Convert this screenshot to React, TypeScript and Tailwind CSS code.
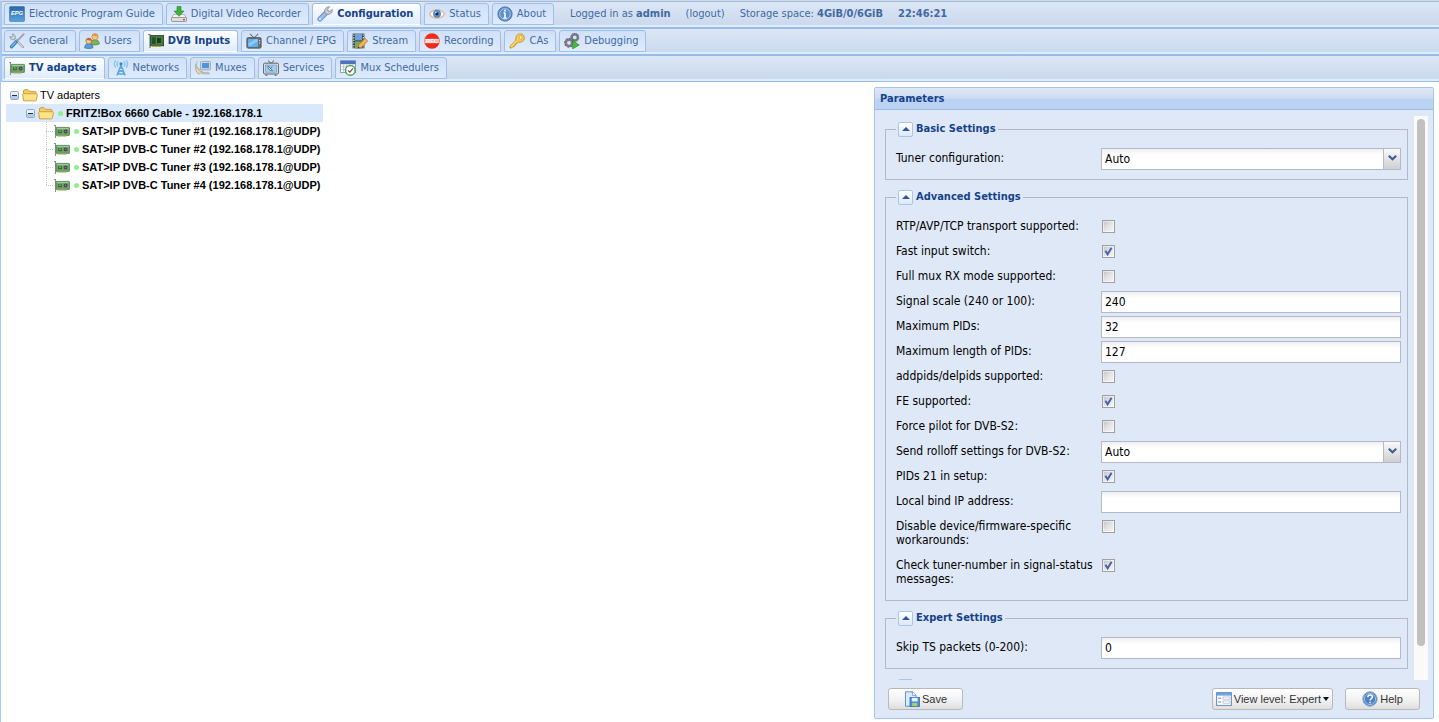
import { useState, type ReactNode } from "react";

function Svg({ children }: { children: ReactNode }) {
  return (
    <svg viewBox="0 0 16 16" className="size-4 shrink-0" aria-hidden="true">
      {children}
    </svg>
  );
}

const EpgIcon = () => (
  <Svg>
    <defs>
      <linearGradient id="epg" x1="0" y1="0" x2="0" y2="1">
        <stop offset="0" stopColor="#2c66a3" />
        <stop offset="1" stopColor="#5aa3de" />
      </linearGradient>
    </defs>
    <rect x="0.5" y="0.5" width="15" height="15" rx="1" fill="url(#epg)" stroke="#3c77b5" strokeWidth="0.6" />
    <text x="8" y="9.3" fontSize="5.8" fontWeight="700" fontStyle="italic" textAnchor="middle" fill="#fff" fontFamily="Liberation Sans, sans-serif">EPG</text>
  </Svg>
);
const DriveIcon = () => (
  <Svg>
    <path d="M2.5 8.5h11l2 4H.5z" fill="#f4f4f4" stroke="#999" strokeWidth="0.7" />
    <rect x="0.5" y="11.5" width="15" height="4" rx="0.8" fill="#ddd" stroke="#888" strokeWidth="0.8" />
    <rect x="12" y="13" width="2" height="1.3" fill="#d33" />
    <path d="M6 .5h4V5h3L8 10.3 3 5h3z" fill="#3fb13b" stroke="#278527" strokeWidth="0.6" />
  </Svg>
);
const WrenchIcon = () => (
  <Svg>
    <path d="M2.9 13.1 9 7" stroke="#6b8fd0" strokeWidth="5" strokeLinecap="round" />
    <path d="M2.9 13.1 8.5 7.5" stroke="#9dbcf0" strokeWidth="3" strokeLinecap="round" />
    <path d="M8.2 7.8C6.6 4 9 .5 12.6.8L10.7 3l.4 2 2 .4 2.2-2c.5 3.9-3.1 6-7.1 4.4z" fill="#c9ccd1" stroke="#84898f" strokeWidth="0.8" />
    <circle cx="3" cy="13" r="0.9" fill="#e6eefb" />
  </Svg>
);
const EyeIcon = () => (
  <Svg>
    <path d="M.5 8C4 2.2 12 2.2 15.5 8 12 13.5 4 13.5.5 8z" fill="#fff" stroke="#e0b595" strokeWidth="1.3" />
    <circle cx="8" cy="7.8" r="3.7" fill="#5c93d0" stroke="#3f6fad" strokeWidth="0.6" />
    <circle cx="8" cy="7.8" r="1.6" fill="#16294a" />
    <circle cx="6.8" cy="6.5" r="0.7" fill="#fff" />
  </Svg>
);
const InfoIcon = () => (
  <Svg>
    <circle cx="8" cy="8" r="7.1" fill="#5d8fc8" stroke="#4674ac" />
    <circle cx="8" cy="8" r="5.3" fill="none" stroke="#b9d2ee" strokeWidth="0.8" />
    <path d="M8 3.8v1.6M8 6.7v5.2M6.6 6.9H8M6.4 12h3.2" stroke="#fff" strokeWidth="1.6" />
  </Svg>
);
const ToolsIcon = () => (
  <Svg>
    <path d="M4.5 4.5 14 14" stroke="#8c9299" strokeWidth="2.4" strokeLinecap="round" />
    <path d="M4.5 4.5 14 14" stroke="#d9dde1" strokeWidth="1.1" strokeLinecap="round" />
    <path d="M1 3.3C.4 6 3.3 7.6 5.8 6.3 7.3 4 5.8.6 3 1l1.4 1.9-1.3 1.3z" fill="#d0d4d8" stroke="#858b92" strokeWidth="0.7" />
    <path d="m14.8 1.2-7 7" stroke="#9aa0a6" strokeWidth="1.7" strokeLinecap="round" />
    <path d="m7 9-4.5 4.7" stroke="#3e87cc" strokeWidth="3.4" strokeLinecap="round" />
    <path d="m6.4 9.3-3.8 4" stroke="#86bdec" strokeWidth="1.1" strokeLinecap="round" />
  </Svg>
);
const UsersIcon = () => (
  <Svg>
    <path d="M7 11.5c0-3.2 1.3-4.8 4-4.8s4.3 1.6 4.3 4.2c-2 1.1-5.5 1.4-8.3.6z" fill="#79b551" stroke="#4f8530" strokeWidth="0.7" />
    <circle cx="11" cy="3.8" r="3.1" fill="#f3c797" stroke="#bf7c35" strokeWidth="0.7" />
    <path d="M8 3.4C8.2-.4 13.8-.4 14 3.4c-2 .2-3.6-.4-4.2-1-.4.6-1 1-1.8 1z" fill="#dd9b3d" />
    <path d="M.7 15c0-3.2 1.4-4.4 4-4.4s4.3 1.2 4.3 4.2c-2.2.9-5.8.9-8.3.2z" fill="#5a9bdc" stroke="#2f6cae" strokeWidth="0.7" />
    <circle cx="4.8" cy="8" r="2.9" fill="#f3c797" stroke="#a56a2e" strokeWidth="0.7" />
    <path d="M1.9 7.6c.2-3.6 5.6-3.6 5.8 0-2 .2-3.2-.3-4-1-.4.6-1 1-1.8 1z" fill="#b3692b" />
  </Svg>
);
const CardIcon = () => (
  <Svg>
    <path d="M0 2.5h1.5V15" fill="none" stroke="#8d8f92" strokeWidth="1.1" />
    <rect x="2" y="4.4" width="13.5" height="8" rx="0.6" fill="#6aa865" stroke="#4f8052" strokeWidth="0.8" />
    <path d="M3 5.6h11.5" stroke="#a9d3a0" strokeWidth="0.9" />
    <rect x="4" y="7.2" width="4" height="3" fill="#41633f" />
    <path d="M4.8 8.2h2.4" stroke="#cde3c4" strokeWidth="0.6" />
    <circle cx="11.6" cy="8.4" r="2" fill="#54455f" />
    <circle cx="11.6" cy="8.4" r="0.7" fill="#8d7c98" />
    <path d="M3.5 13h9" stroke="#b3ab62" strokeWidth="1.2" />
  </Svg>
);
const DvbIcon = () => (
  <Svg>
    <path d="M0 1.5h2V15" fill="none" stroke="#777" strokeWidth="1.2" />
    <rect x="2.6" y="2.6" width="13" height="10.2" fill="#3f7a3a" stroke="#1d401e" strokeWidth="0.8" />
    <rect x="4" y="4.4" width="3.6" height="6.6" fill="#274d2a" />
    <rect x="8.6" y="4.4" width="4.6" height="6" fill="#1c3a22" stroke="#5d9450" strokeWidth="0.6" />
    <path d="M4 13.4h9" stroke="#b8a552" strokeWidth="1.2" />
  </Svg>
);
const TvIcon = () => (
  <Svg>
    <path d="M4 .8 8 5 12.3.8" fill="none" stroke="#777" strokeWidth="1.1" />
    <rect x="0.8" y="4.6" width="14.4" height="10.6" rx="1.4" fill="#667078" stroke="#444c54" strokeWidth="0.7" />
    <rect x="2" y="5.9" width="10" height="8" rx="0.8" fill="#5fb1ee" />
    <path d="M2.6 10.5 10 6h1.4v2.6l-8.6 4.8z" fill="#8fcbf6" />
    <path d="M13.6 7v1.2M13.6 9.5v1.2" stroke="#ddd" />
  </Svg>
);
const StreamIcon = () => (
  <Svg>
    <rect x="0.6" y="0.6" width="11.8" height="14.8" fill="#3b4248" />
    <rect x="3" y="1" width="7" height="6.4" fill="#6aa4d8" />
    <rect x="3" y="8.4" width="7" height="6.6" fill="#74a966" />
    <path d="M1.8 1.5v14M11.3 1.5v14" stroke="#eee" strokeWidth="1.1" strokeDasharray="1.3 1.3" />
    <path d="m6 15.3.7-3.5 6.4-6.4 2.6 2.5-6.3 6.5z" fill="#f3b552" stroke="#a96b21" strokeWidth="0.7" />
    <path d="m6 15.3.4-1.9 1.5 1.4z" fill="#333" />
  </Svg>
);
const RecIcon = () => (
  <Svg>
    <circle cx="8" cy="8" r="7.7" fill="#ee2b1c" />
    <rect x="0.6" y="5.8" width="14.8" height="4.4" fill="#f9b3ab" />
    <text x="8" y="10" fontSize="5.6" fontWeight="700" textAnchor="middle" fill="#fff" fontFamily="Liberation Sans, sans-serif">REC</text>
  </Svg>
);
const KeyIcon = () => (
  <Svg>
    <path d="M1 13.2 7 7.3C6 3.5 8.6.7 11.4.8c2.8.1 4.4 2.6 3.9 5-.6 2.5-3.2 3.9-6 3.3L8 10.6H6.6v1.5H5.2v1.6H3.8L2.6 15H1z" fill="#f8ca55" stroke="#c98f24" strokeWidth="0.9" />
    <circle cx="11.6" cy="4.4" r="1.5" fill="#fff" stroke="#c98f24" strokeWidth="0.7" />
    <path d="m2 13.6 5.6-5.5" stroke="#fdebae" strokeWidth="0.8" />
  </Svg>
);
const GearsIcon = () => (
  <Svg>
    <circle cx="10.8" cy="4.4" r="3.1" fill="none" stroke="#73707f" strokeWidth="2.4" />
    <circle cx="10.8" cy="4.4" r="4" fill="none" stroke="#8c8998" strokeWidth="1.3" strokeDasharray="1.6 1.5" />
    <circle cx="5" cy="9.8" r="3.2" fill="none" stroke="#817d8e" strokeWidth="2.6" />
    <circle cx="5" cy="9.8" r="4.3" fill="none" stroke="#696573" strokeWidth="1.3" strokeDasharray="1.7 1.6" />
    <path d="M8.7 7.6 15.2 12l-6.5 3.8z" fill="#43bf3c" stroke="#23851f" strokeWidth="0.7" />
  </Svg>
);
const AntennaIcon = () => (
  <Svg>
    <path d="M8 5 3.8 15.5M8 5l4.2 10.5M6.2 9.4l4.6 3M9.8 9.4l-4.6 3M4.6 14h6.8M6.6 8h2.8" fill="none" stroke="#55a5dd" strokeWidth="1.3" />
    <circle cx="8" cy="3.8" r="1.6" fill="#2f8bd0" />
    <path d="M5.2 1.4a3.6 3.6 0 0 0 0 5M10.8 1.4a3.6 3.6 0 0 1 0 5M2.8.4a6 6 0 0 0 0 7.2M13.2.4a6 6 0 0 1 0 7.2" fill="none" stroke="#7cc3ee" strokeWidth="1.2" />
  </Svg>
);
const MuxIcon = () => (
  <Svg>
    <rect x="5.6" y="1.6" width="9.8" height="8.2" rx="0.8" fill="#d8dce0" stroke="#8f979f" strokeWidth="0.8" />
    <rect x="7" y="3" width="7" height="5.2" fill="#4b95dd" />
    <path d="M8 12.4h5.4l1.4 1.6H7.6z" fill="#c2c6ca" stroke="#999" strokeWidth="0.5" />
    <path d="M1 4c.2 4 3 7.4 7 8L3.6 14.2C.6 11.6-.3 7 1 4z" fill="#e7d6b7" stroke="#a5977b" strokeWidth="0.7" />
    <path d="M2.6 1.2c-1.4 2-1.7 3.4-1.2 5l6 5.4" fill="none" stroke="#a9bccd" strokeWidth="1" />
  </Svg>
);
const ServicesIcon = () => (
  <Svg>
    <path d="M5 .5 8 3.4 11 .5" fill="none" stroke="#555" />
    <rect x="0.6" y="3.2" width="14.8" height="10.8" rx="1" fill="#e4e8eb" stroke="#59626b" />
    <rect x="2.6" y="5" width="10.8" height="7.2" fill="#a3cdf0" stroke="#6a8cab" strokeWidth="0.6" />
    <path d="M5 5.8c-.4 3 1.4 5 4.6 5zM6.6 9l2.8-2.4" fill="#f6f8fa" stroke="#38648d" strokeWidth="0.8" />
    <path d="M2.4 15.2h2M11.6 15.2h2" stroke="#555" />
  </Svg>
);
const CalendarIcon = () => (
  <Svg>
    <rect x="0.6" y="1" width="14.8" height="11.6" fill="#fff" stroke="#7d8ba5" strokeWidth="0.8" />
    <rect x="0.4" y="0.6" width="15.2" height="3.6" fill="#4c72c0" />
    <path d="M.6 6.8h14.8M.6 9.6h14.8M3.6 4.2v8.4M6.6 4.2v8.4M9.6 4.2v8.4M12.6 4.2v8.4" stroke="#a9b5c8" strokeWidth="0.7" />
    <circle cx="10.3" cy="10.4" r="4.8" fill="#fff" stroke="#4fa350" strokeWidth="1.5" />
    <path d="m8 10.3 1.9 1.9 3-3.8" fill="none" stroke="#555" strokeWidth="1.2" />
  </Svg>
);
const FolderIcon = () => (
  <Svg>
    <path d="M1.5 13.5V4c0-.8.4-1.3 1.2-1.3h3.2L7.4 4.4h5.4c.8 0 1.2.4 1.2 1.2V8" fill="#f5cf5d" stroke="#c2953a" strokeWidth="0.9" />
    <path d="M1.6 13.8.6 7.7c-.1-.6.2-1 .8-1h13.2c.6 0 .9.4.8 1l-1 5.4c-.1.5-.5.8-1 .8z" fill="#fbe487" stroke="#c99c3c" strokeWidth="0.9" />
  </Svg>
);
const SaveIcon = () => (
  <Svg>
    <path d="M1.5.8h7L12 4.2v11H1.5z" fill="#dcebfb" stroke="#5b93d3" />
    <path d="M8.4.8v3.5H12" fill="#fff" stroke="#5b93d3" strokeWidth="0.8" />
    <rect x="6" y="6.4" width="9.4" height="9" fill="#4e8fd8" stroke="#2f68ad" strokeWidth="0.8" />
    <rect x="7.8" y="6.8" width="5.8" height="3.6" fill="#eaf3fc" />
    <rect x="8.2" y="12" width="5" height="3.2" fill="#a5d26c" />
  </Svg>
);
const FormIcon = () => (
  <Svg>
    <rect x="0.6" y="1.6" width="14.8" height="12.8" fill="#fff" stroke="#5b8cc4" />
    <rect x="1" y="2" width="14" height="2.6" fill="#6fa3e0" />
    <path d="M2.2 7.2h3M2.2 11h3" stroke="#5b8cc4" />
    <rect x="7" y="6" width="7" height="2.2" fill="#fff" stroke="#a7b4c4" strokeWidth="0.7" />
    <rect x="7" y="10" width="7" height="2.2" fill="#fff" stroke="#a7b4c4" strokeWidth="0.7" />
  </Svg>
);
const HelpIcon = () => (
  <Svg>
    <circle cx="8" cy="8" r="7.2" fill="#4d80c4" stroke="#8fa9cd" />
    <circle cx="8" cy="8" r="5.6" fill="none" stroke="#c4d7f0" strokeWidth="0.7" />
    <path d="M5.8 6.3C5.9 4.7 7 4.1 8.1 4.1c1.3 0 2.3.8 2.3 2 0 1.6-2.3 1.7-2.3 3.3M8.1 10.7v1.5" fill="none" stroke="#fff" strokeWidth="1.5" />
  </Svg>
);

type TabItem = { name: string; icon: () => ReactNode };

const mainTabs: TabItem[] = [
  { name: "Electronic Program Guide", icon: EpgIcon },
  { name: "Digital Video Recorder", icon: DriveIcon },
  { name: "Configuration", icon: WrenchIcon },
  { name: "Status", icon: EyeIcon },
  { name: "About", icon: InfoIcon },
];
const configTabs: TabItem[] = [
  { name: "General", icon: ToolsIcon },
  { name: "Users", icon: UsersIcon },
  { name: "DVB Inputs", icon: DvbIcon },
  { name: "Channel / EPG", icon: TvIcon },
  { name: "Stream", icon: StreamIcon },
  { name: "Recording", icon: RecIcon },
  { name: "CAs", icon: KeyIcon },
  { name: "Debugging", icon: GearsIcon },
];
const inputTabs: TabItem[] = [
  { name: "TV adapters", icon: CardIcon },
  { name: "Networks", icon: AntennaIcon },
  { name: "Muxes", icon: MuxIcon },
  { name: "Services", icon: ServicesIcon },
  { name: "Mux Schedulers", icon: CalendarIcon },
];

function TabBar({ tabs, active, children }: { tabs: TabItem[]; active: string; children?: ReactNode }) {
  return (
    <nav className="border-y border-[#99bbe8]">
      <div className="flex h-[25px] border-b-2 border-[#deecfd] bg-linear-to-b from-[#dce7f5] to-[#cbd9ee] pt-px pl-[2px]">
        <div className="flex gap-[3px]">
          {tabs.map((t) => {
            const on = t.name === active;
            return (
              <button
                key={t.name}
                type="button"
                className={
                  "flex h-[22px] items-center gap-1 rounded-t-[3px] border border-[#9dbfea] pr-[7px] pl-[4px] text-[11px] whitespace-nowrap " +
                  (on
                    ? "border-b-transparent bg-linear-to-b from-white to-[#deecfd] font-bold text-[#15428b]"
                    : "bg-linear-to-b from-[#d0e0f7] to-[#deebfd] text-[#416aa3]")
                }
              >
                <t.icon />
                {t.name}
              </button>
            );
          })}
        </div>
        {children}
      </div>
    </nav>
  );
}

function Toggle() {
  return (
    <svg viewBox="0 0 9 9" className="size-[9px]" aria-hidden="true">
      <rect x="0.5" y="0.5" width="8" height="8" rx="1" fill="#e9eff8" stroke="#8fa8cb" />
      <path d="M1 5h7v3H1z" fill="#b9cbe4" />
      <path d="M2 4.5h5" stroke="#1b2f55" />
    </svg>
  );
}

const Dot = () => <span className="ml-1 size-[5px] rounded-full bg-[#90ee90]" />;

function Elbow({ last }: { last: boolean }) {
  return (
    <svg viewBox="0 0 16 18" className="h-[18px] w-4 shrink-0" aria-hidden="true">
      <path d={last ? "M8.5 0v9" : "M8.5 0v18"} stroke="#c8c8c8" strokeDasharray="1 1" />
      <path d="M8 9.5h8" stroke="#c8c8c8" strokeDasharray="1 1" />
    </svg>
  );
}

function Tree() {
  return (
    <ul className="mt-[4px] ml-[5px] w-fit font-['Liberation_Sans',sans-serif] text-[11px] whitespace-nowrap text-black">
      <li>
        <div className="flex h-[18px] items-center">
          <span className="grid w-4 place-items-center"><Toggle /></span>
          <FolderIcon />
          <span className="pl-[2px]">TV adapters</span>
        </div>
        <ul>
          <li>
            <div className="flex h-[18px] items-center bg-[#d9e8fb] pl-4 font-bold">
              <span className="grid w-4 place-items-center"><Toggle /></span>
              <FolderIcon />
              <Dot />
              <span className="pl-[3px]">FRITZ!Box 6660 Cable - 192.168.178.1</span>
            </div>
            <ul className="pl-8 font-bold">
              {[1, 2, 3, 4].map((n) => (
                <li key={n} className="flex h-[18px] items-center pr-[3px]">
                  <Elbow last={n === 4} />
                  <CardIcon />
                  <Dot />
                  <span className="pl-[3px]">SAT&gt;IP DVB-C Tuner #{n} (192.168.178.1@UDP)</span>
                </li>
              ))}
            </ul>
          </li>
        </ul>
      </li>
    </ul>
  );
}

type Field = { id: string; label: string; kind: "check" | "text" | "select"; value?: string; on?: boolean };

const basic: Field[] = [{ id: "tunercfg", label: "Tuner configuration:", kind: "select", value: "Auto" }];
const advanced: Field[] = [
  { id: "tcp", label: "RTP/AVP/TCP transport supported:", kind: "check" },
  { id: "fast", label: "Fast input switch:", kind: "check", on: true },
  { id: "fullmux", label: "Full mux RX mode supported:", kind: "check" },
  { id: "sigscale", label: "Signal scale (240 or 100):", kind: "text", value: "240" },
  { id: "maxpids", label: "Maximum PIDs:", kind: "text", value: "32" },
  { id: "pidslen", label: "Maximum length of PIDs:", kind: "text", value: "127" },
  { id: "addpids", label: "addpids/delpids supported:", kind: "check" },
  { id: "fe", label: "FE supported:", kind: "check", on: true },
  { id: "pilot", label: "Force pilot for DVB-S2:", kind: "check" },
  { id: "rolloff", label: "Send rolloff settings for DVB-S2:", kind: "select", value: "Auto" },
  { id: "pids21", label: "PIDs 21 in setup:", kind: "check", on: true },
  { id: "bind", label: "Local bind IP address:", kind: "text", value: "" },
  { id: "workarounds", label: "Disable device/firmware-specific workarounds:", kind: "check" },
  { id: "tunernum", label: "Check tuner-number in signal-status messages:", kind: "check", on: true },
];
const expert: Field[] = [{ id: "skipts", label: "Skip TS packets (0-200):", kind: "text", value: "0" }];

const boxClass =
  "h-[22px] w-full rounded-none border border-[#b5b8c8] bg-linear-to-b from-[#eeeff0] via-white via-30% to-white pl-[3px] text-[12px] text-black outline-none";

function Control({ f }: { f: Field }) {
  const [on, setOn] = useState(!!f.on);
  if (f.kind === "check")
    return (
      <span className="ml-px grid h-[25px] w-[13px] place-items-center">
        <input
          id={f.id}
          type="checkbox"
          checked={on}
          onChange={() => setOn(!on)}
          className="col-start-1 row-start-1 size-[13px] appearance-none border border-[#a0a0a4] bg-linear-to-br from-[#c0c2c6] via-[#e4e4e4] to-[#f6f6f6] ring-1 ring-white/50 ring-inset"
        />
        {on && (
          <svg viewBox="0 0 13 13" className="pointer-events-none col-start-1 row-start-1 size-[13px]" aria-hidden="true">
            <path d="M3.4 5.8 5.6 9.3 9.6 2.8" fill="none" stroke="#4a62ad" strokeWidth="2" />
          </svg>
        )}
      </span>
    );
  if (f.kind === "select")
    return (
      <span className="relative flex flex-1 items-center">
        <select id={f.id} className={boxClass + " appearance-none"}>
          <option>{f.value}</option>
        </select>
        <span className="pointer-events-none absolute right-0 grid h-[22px] w-[18px] place-items-center border border-[#b5b8c8] bg-linear-to-b from-[#fafafa] to-[#cfcfcf] pb-[2px]">
          <svg viewBox="0 0 9 6" className="h-[6px] w-[9px]" aria-hidden="true">
            <path d="M.8.8 4.5 4.3 8.2.8" fill="none" stroke="#3c5a9c" strokeWidth="2.1" />
          </svg>
        </span>
      </span>
    );
  return (
    <span className="flex flex-1 items-center">
      <input id={f.id} type="text" defaultValue={f.value} className={boxClass} />
    </span>
  );
}

function CollapseButton() {
  return (
    <button type="button" aria-label="Collapse" className="grid size-[15px] place-items-center rounded-[2px] border border-[#a9c5ee] bg-linear-to-b from-white to-[#dce9fa]">
      <svg viewBox="0 0 8 4" className="h-1 w-2" aria-hidden="true">
        <path d="M4 0 8 4H0z" fill="#2f55a4" />
      </svg>
    </button>
  );
}

function Group({ title, fields }: { title: string; fields: Field[] }) {
  return (
    <fieldset className="border border-[#b5b8c8] px-[6px] pb-2 pl-[10px]">
      <legend className="flex h-4 items-center gap-[3px] px-[2px] text-[11px] font-bold text-[#15428b]">
        <CollapseButton />
        <span className="pt-px">{title}</span>
      </legend>
      <div className="pt-[9px]">
        {fields.map((f) => (
          <div key={f.id} className="flex">
            <label htmlFor={f.id} className="mr-[5px] w-[200px] shrink-0 pt-[5px] pb-[6px] leading-[14px]">
              {f.label}
            </label>
            <Control f={f} />
          </div>
        ))}
      </div>
    </fieldset>
  );
}

const buttonClass =
  "flex h-[22px] items-center justify-center gap-[2px] rounded-[3px] border border-[#b9b9b9] bg-linear-to-b from-white via-[#f0f0f0] via-60% to-[#dedede] font-['Liberation_Sans',sans-serif] text-[11px] text-[#333]";

function Parameters() {
  return (
    <section className="mt-[5px] mr-[5px] mb-[3px] flex min-h-0 flex-col rounded-[2px] border border-[#a5c4ec] text-[12px]">
      <h2 className="flex h-[22px] shrink-0 items-center border-b border-[#99bbe8] bg-linear-to-b from-[#dfe9f5] via-[#cddcf2] via-48% to-[#bbd3f2] to-54% pt-px pl-[5px] text-[11px] font-bold text-[#15428b]">
        Parameters
      </h2>
      <div className="flex min-h-0 flex-1 flex-col bg-[#dfe8f6] px-[5px] pt-[6px] text-black">
        <div className="flex min-h-0 flex-1">
          <div className="flex min-h-0 min-w-0 flex-1 flex-col gap-[9px] overflow-y-auto pt-[5px] pr-[6px] pl-[5px] [scrollbar-width:none]">
            <Group title="Basic Settings" fields={basic} />
            <Group title="Advanced Settings" fields={advanced} />
            <Group title="Expert Settings" fields={expert} />
            <fieldset className="border border-[#b5b8c8] pl-[10px]">
              <legend className="flex h-4 items-center px-[2px]">
                <CollapseButton />
              </legend>
            </fieldset>
          </div>
          <div className="flex w-[14px] justify-center bg-[#fafafa] pt-[3px]" aria-hidden="true">
            <div className="h-[94%] w-2 rounded-full bg-[#c1c1c1]" />
          </div>
        </div>
        <div className="flex h-[38px] shrink-0 items-center gap-3 px-2">
          <button type="button" className={buttonClass + " mr-auto w-[75px]"}>
            <SaveIcon />
            Save
          </button>
          <button type="button" className={buttonClass + " px-[3px]"}>
            <FormIcon />
            View level: Expert
            <svg viewBox="0 0 6 4" className="h-1 w-[6px]" aria-hidden="true">
              <path d="M0 0h6L3 4z" fill="#111" />
            </svg>
          </button>
          <button type="button" className={buttonClass + " w-[75px]"}>
            <HelpIcon />
            Help
          </button>
        </div>
      </div>
    </section>
  );
}

export default function App() {
  return (
    <div className="flex h-screen flex-col border-t border-[#d8d8d8] bg-white font-['DejaVu_Sans_Condensed','DejaVu_Sans',sans-serif]">
      <div className="flex min-h-0 flex-1 flex-col border-l-2 border-[#a9c8f3]">
        <TabBar tabs={mainTabs} active="Configuration">
          <div className="ml-4 flex items-center gap-[15px] text-[11px] whitespace-nowrap text-[#416aa3]">
            <span>
              Logged in as <b>admin</b>
            </span>
            <a href="#logout">(logout)</a>
            <span>
              Storage space: <b>4GiB/0/6GiB</b>
            </span>
            <b>22:46:21</b>
          </div>
        </TabBar>
        <TabBar tabs={configTabs} active="DVB Inputs" />
        <TabBar tabs={inputTabs} active="TV adapters" />
        <main className="-ml-[1px] grid min-h-0 flex-1 grid-cols-[minmax(0,1fr)_565px] grid-rows-[minmax(0,1fr)] bg-white">
          <Tree />
          <Parameters />
        </main>
      </div>
    </div>
  );
}
